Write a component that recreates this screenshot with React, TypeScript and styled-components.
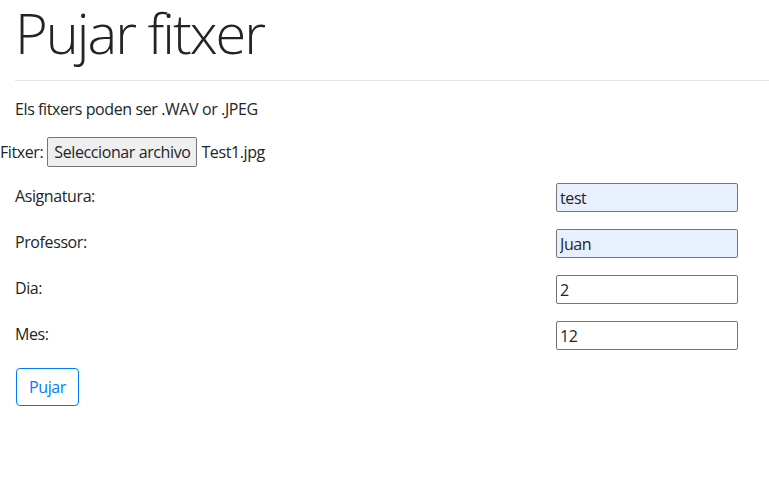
import React from "react";
import styled, { createGlobalStyle } from "styled-components";

const Global = createGlobalStyle`
  html, body { margin: 0; padding: 0; background: #fff; }
  body {
    font-family: "Open Sans", "Noto Sans", sans-serif;
    font-size: 16px;
    line-height: 1.5;
    letter-spacing: -0.4px;
    color: #212529;
    overflow: hidden;
  }
  * { box-sizing: border-box; }
`;

const Page = styled.div`
  padding: 0 0 0 15px;
`;

const Title = styled.h1`
  margin: -6px 0 0 0;
  font-size: 56px;
  font-weight: 300;
  line-height: 76px;
  letter-spacing: -2px;
`;

const Rule = styled.hr`
  margin: 10px 0 16px 0;
  border: 0;
  border-top: 1px solid rgba(0, 0, 0, 0.1);
`;

const Note = styled.p`
  margin: 0 0 16px 0;
  line-height: 24px;
`;

const FileRow = styled.div`
  display: flex;
  align-items: center;
  gap: 4px;
  margin-left: -15px;
  height: 30px;
  margin-bottom: 16px;
`;

const FileButton = styled.button`
  font: inherit;
  letter-spacing: inherit;
  color: #212529;
  height: 30px;
  padding: 0 6px;
  background: #efefef;
  border: 1px solid #767676;
  border-radius: 2px;
`;

const Form = styled.form`
  padding-right: 31px;
`;

const Field = styled.div`
  display: grid;
  grid-template-columns: 1fr 182px;
  align-items: start;
  margin-bottom: 17px;
`;

const Label = styled.label`
  line-height: 24px;
  padding-top: 1px;
`;

const Input = styled.input<{ $filled?: boolean }>`
  font: inherit;
  letter-spacing: inherit;
  color: #212529;
  height: 29px;
  width: 182px;
  padding: 0 3px;
  border: 1px solid #767676;
  border-radius: 2px;
  background: ${(p) => (p.$filled ? "#e8f0fe" : "#fff")};
`;

const Submit = styled.button`
  font: inherit;
  letter-spacing: inherit;
  color: #007bff;
  background: transparent;
  border: 1px solid #007bff;
  border-radius: 4px;
  padding: 6px 12px;
  line-height: 24px;
  margin-top: 1px;
  margin-left: 1px;
`;

const fields = [
  { label: "Asignatura:", value: "test", filled: true },
  { label: "Professor:", value: "Juan", filled: true },
  { label: "Dia:", value: "2", filled: false },
  { label: "Mes:", value: "12", filled: false },
];

export default function App() {
  return (
    <Page>
      <Global />
      <Title>Pujar fitxer</Title>
      <Rule />
      <Note>Els fitxers poden ser .WAV or .JPEG</Note>
      <FileRow>
        <span>Fitxer:</span>
        <FileButton type="button">Seleccionar archivo</FileButton>
        <span>Test1.jpg</span>
      </FileRow>
      <Form onSubmit={(e) => e.preventDefault()}>
        {fields.map((f) => (
          <Field key={f.label}>
            <Label>{f.label}</Label>
            <Input $filled={f.filled} defaultValue={f.value} />
          </Field>
        ))}
        <Submit type="submit">Pujar</Submit>
      </Form>
    </Page>
  );
}
